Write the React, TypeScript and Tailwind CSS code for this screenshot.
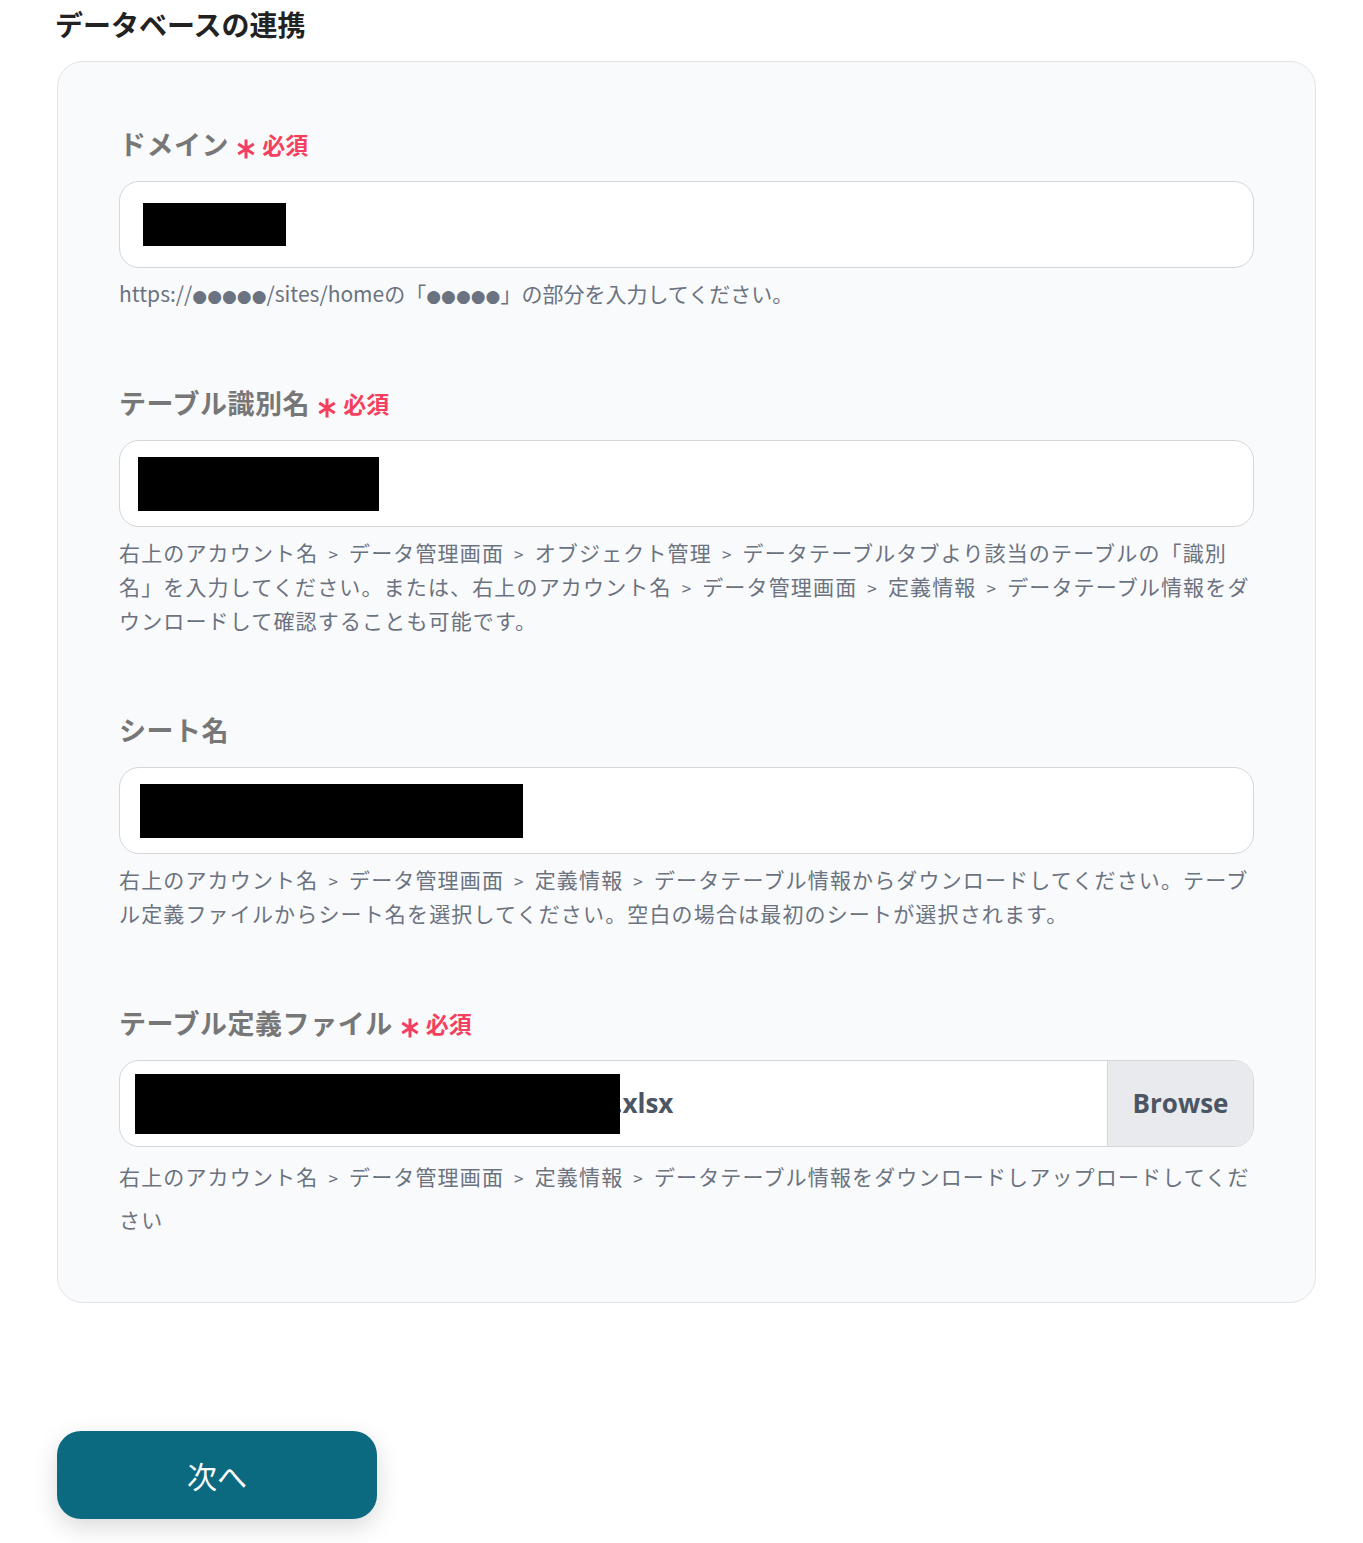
const Asterisk = () => (
  <svg className="ml-[8px] mt-[10px] w-[18px] h-[20px]" viewBox="0 0 18 20" fill="none" stroke="#f43f5e" strokeWidth={3} strokeLinecap="square">
    <path d="M9 2v16M2.5 5.8l13 8.4M15.5 5.8l-13 8.4" />
  </svg>
);

const Required = () => (
  <>
    <Asterisk />
    <span className="ml-[7px] text-[23px] font-bold text-[#f43f5e]">必須</span>
  </>
);

const Help = ({
  text,
  leading = "leading-[34px]",
  tracking = "tracking-[0.055em]",
}: {
  text: string;
  leading?: string;
  tracking?: string;
}) => {
  const nodes: React.ReactNode[] = [];
  text.split(" > ").forEach((part, i) => {
    if (i > 0)
      nodes.push(
        <span key={`s${i}`} className="px-[10px] text-[17px] leading-none">
          &gt;
        </span>
      );
    part.split("●").forEach((s, j) => {
      if (j > 0)
        nodes.push(
          <span key={`d${i}-${j}`} className="font-['DejaVu_Sans',sans-serif] text-[17px] leading-none">
            ●
          </span>
        );
      if (s) nodes.push(s);
    });
  });
  return <p className={`mt-[8px] text-[21px] text-[#6b7280] ${tracking} ${leading}`}>{nodes}</p>;
};

const Label = ({ text, required }: { text: string; required?: boolean }) => (
  <div className="flex items-center h-[40px]">
    <span className="text-[27px] font-bold text-[#777777] tracking-[0.02em]">{text}</span>
    {required && <Required />}
  </div>
);

const Field = ({
  label,
  required,
  redact,
  help,
  tracking,
}: {
  label: string;
  required?: boolean;
  redact: string;
  help: string;
  tracking?: string;
}) => (
  <div>
    <Label text={label} required={required} />
    <div className="mt-[17px] h-[87px] rounded-[20px] border border-[#d4d6da] bg-white flex items-center">
      <div className={`bg-black ${redact}`} />
    </div>
    <Help text={help} tracking={tracking} />
  </div>
);

export default function App() {
  return (
    <div className="min-h-[1543px] bg-white px-[57px] pt-[4px] font-['Noto_Sans_CJK_JP','Noto_Sans',sans-serif]">
      <h1 className="-ml-[2px] text-[28px] font-bold text-[#222222] leading-[40px]">データベースの連携</h1>

      <div className="mt-[17px] w-[1259px] rounded-[26px] border border-[#e2e4e8] bg-[#f9fafb] px-[61px] pt-[62px] pb-[61px] flex flex-col gap-[73px]">
        <Field
          label="ドメイン"
          required
          redact="ml-[23px] w-[143px] h-[43px]"
          tracking="tracking-normal"
          help="https://●●●●●/sites/homeの「●●●●●」の部分を入力してください。"
        />
        <Field
          label="テーブル識別名"
          required
          redact="ml-[18px] w-[241px] h-[54px]"
          help="右上のアカウント名 > データ管理画面 > オブジェクト管理 > データテーブルタブより該当のテーブルの「識別名」を入力してください。または、右上のアカウント名 > データ管理画面 > 定義情報 > データテーブル情報をダウンロードして確認することも可能です。"
        />
        <Field
          label="シート名"
          redact="ml-[20px] w-[383px] h-[54px]"
          help="右上のアカウント名 > データ管理画面 > 定義情報 > データテーブル情報からダウンロードしてください。テーブル定義ファイルからシート名を選択してください。空白の場合は最初のシートが選択されます。"
        />
        <div>
          <Label text="テーブル定義ファイル" required />
          <div className="mt-[17px] h-[87px] rounded-[20px] border border-[#d4d6da] bg-white flex overflow-hidden">
            <div className="flex-1 flex items-center">
              <div className="relative z-10 ml-[15px] w-[485px] h-[60px] bg-black" />
              <span className="-ml-[5px] text-[26px] font-bold text-[#4b5563] font-['Open_Sans',sans-serif]">.xlsx</span>
            </div>
            <div className="w-[146px] border-l border-[#d4d6da] bg-[#e8eaed] flex items-center justify-center text-[26px] font-bold text-[#4b5563] font-['Open_Sans',sans-serif]">
              Browse
            </div>
          </div>
          <Help
            leading="leading-[43px]"
            text="右上のアカウント名 > データ管理画面 > 定義情報 > データテーブル情報をダウンロードしアップロードしてください"
          />
        </div>
      </div>

      <button className="mt-[128px] h-[88px] w-[320px] rounded-[24px] bg-[#0b6a80] text-white text-[30px] shadow-[0_8px_24px_rgba(0,0,0,0.15)]">
        次へ
      </button>
    </div>
  );
}
